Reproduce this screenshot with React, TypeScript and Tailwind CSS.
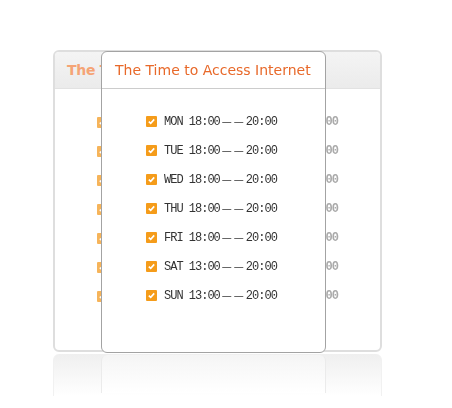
import React from "react";

const rows = [
  ["MON", "18:00"],
  ["TUE", "18:00"],
  ["WED", "18:00"],
  ["THU", "18:00"],
  ["FRI", "18:00"],
  ["SAT", "13:00"],
  ["SUN", "13:00"],
];

function Check({ faded }: { faded?: boolean }) {
  return (
    <span
      className={
        "inline-flex h-[11px] w-[11px] shrink-0 items-center justify-center rounded-[1px] " +
        (faded ? "bg-[#f6b45a]" : "bg-[#f59c1a]")
      }
    >
      <svg width="9" height="9" viewBox="0 0 9 9">
        <path d="M1.8 4.6 L3.7 6.4 L7.2 2.4" fill="none" stroke="white" strokeWidth="1.6" />
      </svg>
    </span>
  );
}

function Time({ day, start }: { day: string; start: string }) {
  return (
    <span className="flex items-center font-['Liberation_Mono',monospace] text-[12px] tracking-[-1px] text-[#333]">
      <span>{day}&nbsp;{start}</span>
      <span className="ml-[2px] font-['DejaVu_Sans',sans-serif] text-[10px] tracking-[2px]">——</span>
      <span>20:00</span>
    </span>
  );
}

export default function App() {
  return (
    <div className="relative h-[408px] w-[452px] overflow-hidden bg-white font-['DejaVu_Sans',sans-serif]">
      <div className="pl-[53px] pt-[50px]">
        {/* back card */}
        <div className="h-[302px] w-[329px] overflow-hidden rounded-[6px] border-2 border-[#dedede] bg-white blur-[0.4px]">
          <div className="flex h-[37px] items-center border-b border-[#e2e2e2] bg-gradient-to-b from-[#f4f4f4] to-[#ebebeb] pl-[12px]">
            <span className="whitespace-nowrap text-[14px] font-bold tracking-[-0.3px] text-[#f5a476]">The T</span>
          </div>
          <div className="flex flex-col pt-[18px]">
            {rows.map(([d]) => (
              <div key={d} className="flex h-[29px] items-center">
                <span className="ml-[42px]">
                  <Check faded />
                </span>
                <span className="ml-auto mr-[42px] font-['Liberation_Mono',monospace] text-[12px] font-bold tracking-[-1px] text-[#aaa]">
                  00
                </span>
              </div>
            ))}
          </div>
        </div>
        {/* back reflection */}
        <div className="mt-[2px] h-[42px] w-[329px] rounded-t-[6px] border-x border-[#f1f1f1] bg-gradient-to-b from-[#efefef] to-white" />
      </div>

      {/* front card */}
      <div className="absolute left-[101px] top-[51px] flex flex-col">
        <div className="h-[302px] w-[225px] overflow-hidden rounded-[6px] border border-[#a3a3a3] bg-white">
          <div className="flex h-[37px] items-center border-b border-[#cccccc] pl-[13px] text-[14px] text-[#e8692a]">
            The Time to Access Internet
          </div>
          <div className="flex flex-col pt-[18px]">
            {rows.map(([d, s]) => (
              <div key={d} className="flex h-[29px] items-center gap-[7px] pl-[44px]">
                <Check />
                <Time day={d} start={s} />
              </div>
            ))}
          </div>
        </div>
        <div className="mt-[2px] h-[38px] w-[225px] rounded-t-[6px] border-x border-[#ebebeb] bg-gradient-to-b from-[#f5f5f5] to-white" />
      </div>
    </div>
  );
}
